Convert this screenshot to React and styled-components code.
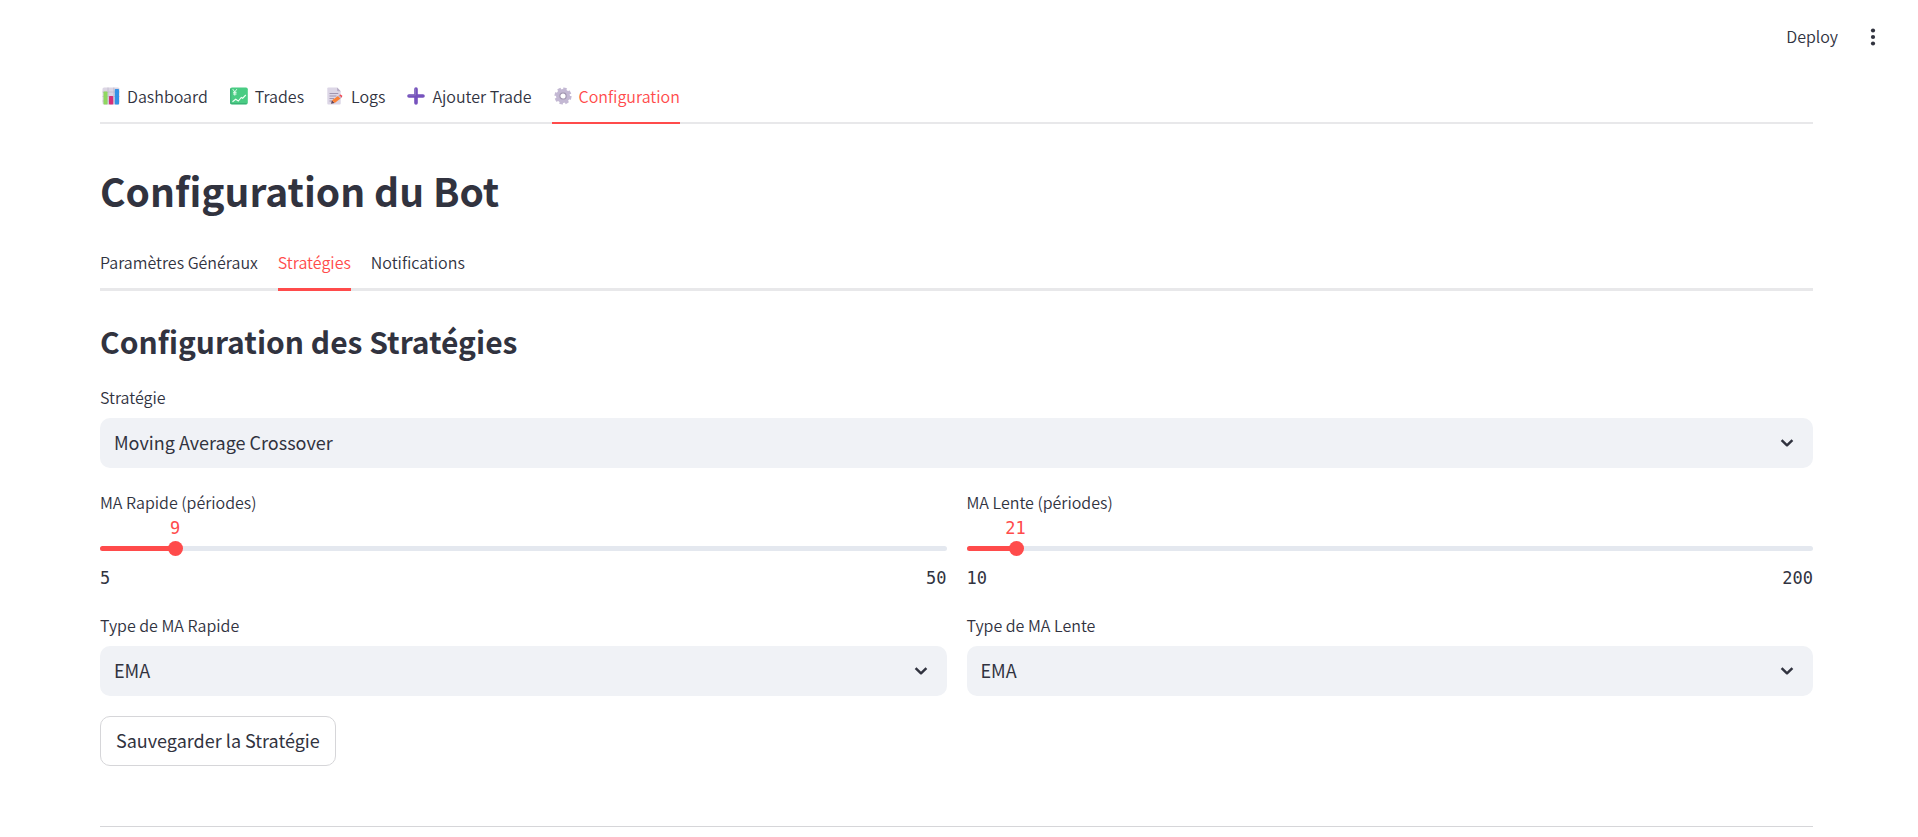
import React, { useState } from 'react';
import styled, { createGlobalStyle } from 'styled-components';

const mainTabs = [
  { id: 'dashboard', label: 'Dashboard', icon: ChartIcon },
  { id: 'trades', label: 'Trades', icon: TradesIcon },
  { id: 'logs', label: 'Logs', icon: MemoIcon },
  { id: 'add', label: 'Ajouter Trade', icon: PlusIcon },
  { id: 'config', label: 'Configuration', icon: GearIcon },
];

const configTabs = [
  { id: 'general', label: 'Paramètres Généraux' },
  { id: 'strategies', label: 'Stratégies' },
  { id: 'notifications', label: 'Notifications' },
];

const App = () => {
  const [page, setPage] = useState('config');
  const [section, setSection] = useState('strategies');

  return (
    <>
      <GlobalStyle />
      <Header>
        <DeployButton type="button">Deploy</DeployButton>
        <MenuButton type="button" aria-label="Menu">
          <svg width="6" height="18" viewBox="0 0 6 18" fill="currentColor">
            <circle cx="3" cy="2.5" r="2.1" />
            <circle cx="3" cy="9" r="2.1" />
            <circle cx="3" cy="15.5" r="2.1" />
          </svg>
        </MenuButton>
      </Header>

      <Content>
        <TabList role="tablist" $line={2}>
          {mainTabs.map(({ id, label, icon: Icon }) => (
            <Tab
              key={id}
              type="button"
              role="tab"
              $line={2}
              aria-selected={page === id}
              onClick={() => setPage(id)}
            >
              <IconSlot><Icon /></IconSlot>
              {label}
            </Tab>
          ))}
        </TabList>

        <PageTitle>Configuration du Bot</PageTitle>

        <TabList role="tablist" $line={3}>
          {configTabs.map(({ id, label }) => (
            <Tab
              key={id}
              type="button"
              role="tab"
              $line={3}
              aria-selected={section === id}
              onClick={() => setSection(id)}
            >
              {label}
            </Tab>
          ))}
        </TabList>

        <SectionTitle>Configuration des Stratégies</SectionTitle>

        <Form onSubmit={(e) => e.preventDefault()}>
          <SelectField
            id="strategy"
            label="Stratégie"
            options={['Moving Average Crossover', 'RSI', 'MACD']}
          />
          <Columns>
            <SliderField id="fast" label="MA Rapide (périodes)" min={5} max={50} initial={9} />
            <SliderField id="slow" label="MA Lente (périodes)" min={10} max={200} initial={21} />
            <SelectField id="fast-type" label="Type de MA Rapide" options={['EMA', 'SMA']} />
            <SelectField id="slow-type" label="Type de MA Lente" options={['EMA', 'SMA']} />
          </Columns>
          <SaveButton type="submit">Sauvegarder la Stratégie</SaveButton>
        </Form>

        <Divider />
      </Content>
    </>
  );
};

const SelectField = ({ id, label, options }) => (
  <div>
    <Label htmlFor={id}>{label}</Label>
    <SelectBox>
      <Select id={id}>
        {options.map((option) => (
          <option key={option}>{option}</option>
        ))}
      </Select>
      <Chevron width="14" height="10" viewBox="0 0 14 10" fill="none">
        <path d="M1.6 2.1 7 7.3l5.4-5.2" stroke="currentColor" strokeWidth="2.5" strokeLinejoin="round" />
      </Chevron>
    </SelectBox>
  </div>
);

const SliderField = ({ id, label, min, max, initial }) => {
  const [value, setValue] = useState(initial);
  const percent = `${((value - min) / (max - min)) * 100}%`;

  return (
    <div>
      <SliderLabel htmlFor={id}>{label}</SliderLabel>
      <ValueRow>
        <Value htmlFor={id} style={{ left: percent }}>{value}</Value>
      </ValueRow>
      <SliderBox>
        <Track><Fill style={{ width: percent }} /></Track>
        <Range
          id={id}
          type="range"
          min={min}
          max={max}
          value={value}
          onChange={(e) => setValue(Number(e.target.value))}
        />
      </SliderBox>
      <Ticks>
        <span>{min}</span>
        <span>{max}</span>
      </Ticks>
    </div>
  );
};

function ChartIcon() {
  return (
    <svg width="18" height="18" viewBox="0 0 18 18">
      <rect x="0.5" y="0.5" width="17" height="17" rx="1.5" fill="#dcd6e4" />
      <path d="M0.5 5h17M0.5 9.5h17M0.5 14h17M6 .5v17M11.8.5v17" stroke="#c2bacd" strokeWidth="0.8" />
      <rect x="1.5" y="4.5" width="4" height="13" rx="0.7" fill="#8fd860" />
      <rect x="7" y="9" width="4.2" height="8.5" rx="0.7" fill="#d62f78" />
      <rect x="12.8" y="2" width="4.2" height="15.5" rx="0.7" fill="#3392e6" />
    </svg>
  );
}

function TradesIcon() {
  return (
    <svg width="18" height="18" viewBox="0 0 18 18">
      <rect x="0.2" y="0.5" width="17.6" height="17" rx="1.8" fill="#49cc83" />
      <path d="M.7 1.5v15.2h16" stroke="#35a873" strokeWidth="0.9" fill="none" />
      <path d="M2.8 2.2l2 2.7 2-2.7M4.8 4.9v3.7M3 5.3h3.6M3 7h3.6" stroke="#effff5" strokeWidth="0.9" fill="none" />
      <path d="M2.5 14.8l3.2-2.6 2.6 1.8 3-3.6 1.4.8L15.8 8" stroke="#effff5" strokeWidth="1.1" fill="none" />
    </svg>
  );
}

function MemoIcon() {
  return (
    <svg width="18" height="18" viewBox="0 0 18 18">
      <path d="M2.3.5h8.8l3.6 3.8v12.2q0 1-1 1H2.3q-1 0-1-1v-15q0-1 1-1z" fill="#dcd6e6" />
      <path d="M11.1.5v2.8q0 1 1 1h2.6z" fill="#b5aac3" />
      <path d="M3.5 6.5h8.8M3.5 9h7M3.5 11.5h4.5M3.5 14h3" stroke="#998da9" strokeWidth="0.9" />
      <path d="M5 16.8l1-3.6 2.7 2.7z" fill="#634455" />
      <path d="M6 13.2l6-4.3 2.5 2.7-5.8 4.3z" fill="#fb8035" />
      <path d="M12 8.9l1.2-.9 2.5 2.7-1.2.9z" fill="#c2b4c9" />
      <path d="M13.2 8q1.2-1 2.4.2t.1 2.5z" fill="#f04752" />
    </svg>
  );
}

function PlusIcon() {
  return (
    <svg width="18" height="18" viewBox="0 0 18 18">
      <path d="M9 2v14M2 9h14" stroke="#7652bd" strokeWidth="3.6" strokeLinecap="round" />
      <path d="M8.5 2v6.1H2" stroke="#8873be" strokeWidth="1" strokeLinecap="round" fill="none" />
    </svg>
  );
}

function GearIcon() {
  return (
    <svg width="18" height="18" viewBox="0 0 18 18">
      <circle cx="9" cy="9" r="7" fill="none" stroke="#c3b8d3" strokeWidth="3.2" strokeDasharray="3.3 2.2" />
      <circle cx="9" cy="9" r="5.2" fill="none" stroke="#c3b8d3" strokeWidth="3.6" />
      <circle cx="9" cy="9" r="3.2" fill="#fff" stroke="#9d91ad" strokeWidth="1.2" />
    </svg>
  );
}

const GlobalStyle = createGlobalStyle`
  * {
    box-sizing: border-box;
  }

  body {
    margin: 0;
    background: #ffffff;
    color: #31333f;
    font-family: 'Noto Sans CJK SC', 'Open Sans', sans-serif;
    font-size: 18px;
  }

  button,
  select {
    font-family: inherit;
    color: inherit;
  }
`;

const Header = styled.header`
  display: flex;
  justify-content: flex-end;
  align-items: center;
  gap: 32px;
  padding: 12px 42px 10px;
`;

const DeployButton = styled.button`
  border: none;
  background: none;
  padding: 0 0 2px;
  font-size: 16px;
  font-weight: 350;
  line-height: 48px;
  cursor: pointer;
`;

const MenuButton = styled.button`
  display: flex;
  border: none;
  background: none;
  padding: 0;
  cursor: pointer;
`;

const Content = styled.main`
  padding: 0 105px 0 100px;
`;

const TabList = styled.div`
  display: flex;
  gap: 20px;
  box-shadow: inset 0 -${props => props.$line}px #e8e8ea;
`;

const Tab = styled.button`
  display: flex;
  align-items: center;
  gap: 3px;
  border: none;
  border-bottom: ${props => props.$line}px solid transparent;
  background: none;
  padding: 0 0 2px;
  font-size: 16px;
  font-weight: 350;
  line-height: 48px;
  white-space: nowrap;
  cursor: pointer;

  &[aria-selected='true'] {
    color: #ff4b4b;
    border-bottom-color: #ff4b4b;
  }
`;

const IconSlot = styled.span`
  display: flex;
  padding: 0 4px 0 2px;
`;

const PageTitle = styled.h1`
  margin: 39px 0 21px;
  font-size: 39px;
  font-weight: 700;
  line-height: 54px;
`;

const SectionTitle = styled.h2`
  margin: 29px 0 22px;
  font-size: 30px;
  font-weight: 700;
  line-height: 42px;
`;

const Form = styled.form`
  display: flex;
  flex-direction: column;
  gap: 20px;
`;

const Columns = styled.div`
  display: grid;
  grid-template-columns: 1fr 1fr;
  gap: 20px;
`;

const Label = styled.label`
  display: block;
  margin-bottom: 8px;
  font-size: 16px;
  font-weight: 350;
  line-height: 26px;
`;

const SliderLabel = styled(Label)`
  margin-bottom: 2px;
  line-height: 28px;
`;

const SelectBox = styled.div`
  position: relative;
`;

const Select = styled.select`
  display: block;
  width: 100%;
  height: 50px;
  padding: 0 50px 2px 14px;
  appearance: none;
  border: none;
  border-radius: 10px;
  background: #f0f2f6;
  font-size: 18px;
  cursor: pointer;
`;

const Chevron = styled.svg`
  position: absolute;
  right: 19px;
  top: 20px;
  pointer-events: none;
`;

const ValueRow = styled.div`
  position: relative;
  height: 20px;
  margin-bottom: 3px;
`;

const Value = styled.output`
  position: absolute;
  transform: translateX(-50%);
  color: #ff4b4b;
  font-family: 'DejaVu Sans Mono', monospace;
  font-size: 17px;
  line-height: 20px;
`;

const SliderBox = styled.div`
  display: grid;
  align-items: center;
  height: 15px;
  margin-bottom: 8px;
`;

const Track = styled.div`
  grid-area: 1 / 1;
  height: 5px;
  border-radius: 3px;
  background: #e4e8ef;
  overflow: hidden;
`;

const Fill = styled.div`
  height: 100%;
  background: #ff4b4b;
`;

const Range = styled.input`
  grid-area: 1 / 1;
  width: calc(100% + 15px);
  height: 15px;
  margin: 0 -7px;
  appearance: none;
  background: transparent;
  cursor: pointer;

  &::-webkit-slider-thumb {
    appearance: none;
    width: 15px;
    height: 15px;
    border-radius: 50%;
    background: #ff4b4b;
  }
`;

const Ticks = styled.div`
  display: flex;
  justify-content: space-between;
  font-family: 'DejaVu Sans Mono', monospace;
  font-size: 17px;
  line-height: 28px;
`;

const SaveButton = styled.button`
  align-self: flex-start;
  height: 50px;
  padding: 0 15px 2px;
  border: 1px solid #d6d6d9;
  border-radius: 10px;
  background: #ffffff;
  font-size: 18px;
  cursor: pointer;
`;

const Divider = styled.hr`
  height: 1px;
  margin: 60px 0 0;
  border: none;
  background: #d6d6d9;
`;

export default App;
